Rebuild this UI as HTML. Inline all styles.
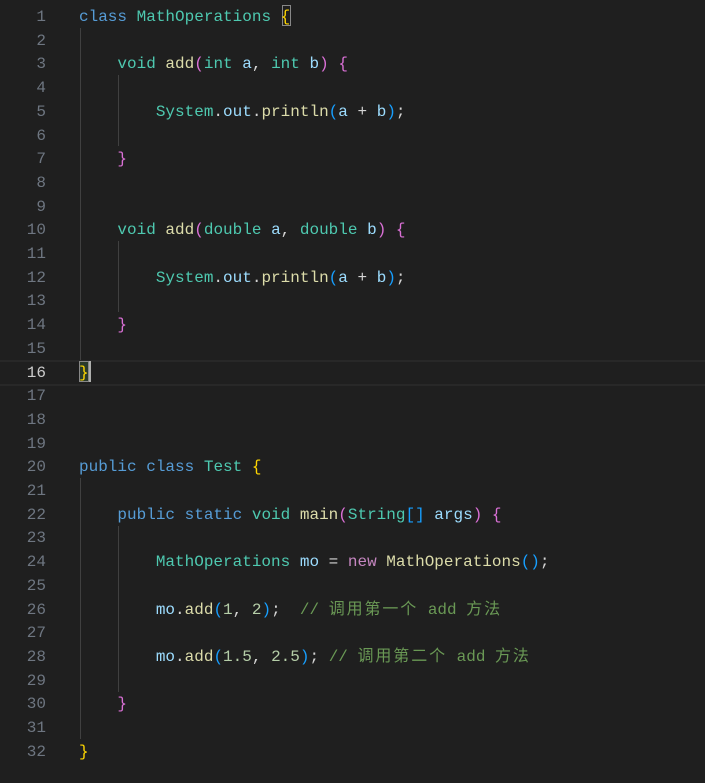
<!DOCTYPE html>
<html><head><meta charset="utf-8"><style>
body{margin:0;background:#1f1f1f;width:705px;height:783px;overflow:hidden;position:relative;font-family:"Liberation Mono","Noto Sans CJK SC",monospace;font-size:16px;}
.l{position:absolute;left:0;width:705px;height:23.7px;line-height:23.7px;white-space:pre;}
.n{position:absolute;right:659px;color:#6e7681;text-align:right;}
.c{position:absolute;left:79px;color:#d4d4d4;}
.k{color:#569cd6}.t{color:#4ec9b0}.f{color:#dcdcaa}.v{color:#9cdcfe}.m{color:#b5cea8}.cm{color:#6a9955}.p{color:#c586c0}
.b1{color:#ffd700}.b2{color:#da70d6}.b3{color:#179fff}
.cj{letter-spacing:1.9px}
.g{position:absolute;width:1px;background:#404040;}
</style></head><body>
<div style="position:absolute;left:0;top:360px;width:705px;height:22px;border-top:2px solid #282828;border-bottom:2px solid #282828;"></div>
<div class="g" style="left:80px;top:28px;height:332px"></div>
<div class="g" style="left:118px;top:75px;height:71px"></div>
<div class="g" style="left:118px;top:241px;height:71px"></div>
<div class="g" style="left:80px;top:478px;height:261px"></div>
<div class="g" style="left:118px;top:526px;height:166px"></div>
<div style="position:absolute;left:282px;top:5px;width:9px;height:21px;border:1px solid #888;box-sizing:border-box"></div>
<div style="position:absolute;left:79px;top:361px;width:10px;height:21px;border:1px solid #888;box-sizing:border-box;background:#2a3a2a"></div>
<div style="position:absolute;left:89px;top:361px;width:2px;height:21px;background:#aeafad"></div>
<div id="code"></div>
<script>
var L=[
'<span class="k">class</span> <span class="t">MathOperations</span> <span class="b1">{</span>',
'',
'    <span class="t">void</span> <span class="f">add</span><span class="b2">(</span><span class="t">int</span> <span class="v">a</span>, <span class="t">int</span> <span class="v">b</span><span class="b2">)</span> <span class="b2">{</span>',
'',
'        <span class="t">System</span>.<span class="v">out</span>.<span class="f">println</span><span class="b3">(</span><span class="v">a</span> + <span class="v">b</span><span class="b3">)</span>;',
'',
'    <span class="b2">}</span>',
'','',
'    <span class="t">void</span> <span class="f">add</span><span class="b2">(</span><span class="t">double</span> <span class="v">a</span>, <span class="t">double</span> <span class="v">b</span><span class="b2">)</span> <span class="b2">{</span>',
'',
'        <span class="t">System</span>.<span class="v">out</span>.<span class="f">println</span><span class="b3">(</span><span class="v">a</span> + <span class="v">b</span><span class="b3">)</span>;',
'',
'    <span class="b2">}</span>',
'',
'<span class="b1">}</span>',
'','','',
'<span class="k">public</span> <span class="k">class</span> <span class="t">Test</span> <span class="b1">{</span>',
'',
'    <span class="k">public</span> <span class="k">static</span> <span class="t">void</span> <span class="f">main</span><span class="b2">(</span><span class="t">String</span><span class="b3">[]</span> <span class="v">args</span><span class="b2">)</span> <span class="b2">{</span>',
'',
'        <span class="t">MathOperations</span> <span class="v">mo</span> = <span class="p">new</span> <span class="f">MathOperations</span><span class="b3">()</span>;',
'',
'        <span class="v">mo</span>.<span class="f">add</span><span class="b3">(</span><span class="m">1</span>, <span class="m">2</span><span class="b3">)</span>;  <span class="cm">// <span class="cj">调用第一个</span> add <span class="cj">方法</span></span>',
'',
'        <span class="v">mo</span>.<span class="f">add</span><span class="b3">(</span><span class="m">1.5</span>, <span class="m">2.5</span><span class="b3">)</span>; <span class="cm">// <span class="cj">调用第二个</span> add <span class="cj">方法</span></span>',
'',
'    <span class="b2">}</span>',
'',
'<span class="b1">}</span>'];
var h='';
for(var i=0;i<L.length;i++){h+='<div class="l" style="top:'+(6+i*23.7)+'px"><span class="n"'+(i==15?' style="color:#cccccc"':'')+'>'+(i+1)+'</span><span class="c">'+L[i]+'</span></div>';}
document.getElementById('code').innerHTML=h;
</script>
</body></html>
